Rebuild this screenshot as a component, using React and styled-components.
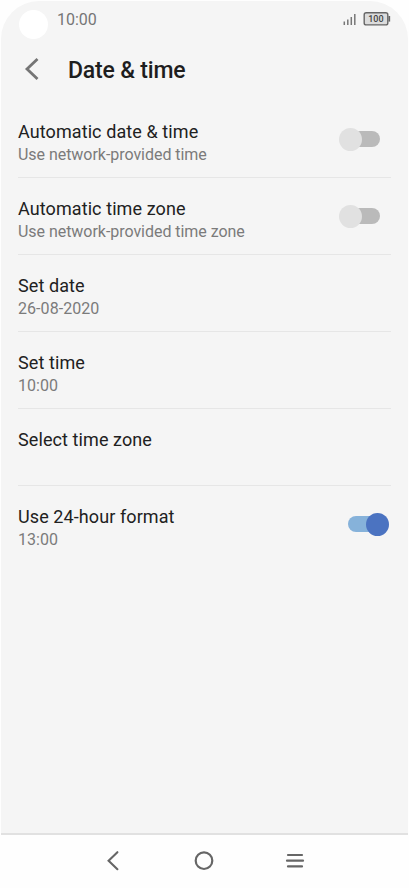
import React from "react";
import styled, { createGlobalStyle } from "styled-components";

const GlobalStyle = createGlobalStyle`
  * { box-sizing: border-box; }
  body { margin: 0; background: #fff; font-family: Roboto, sans-serif; }
`;

const Phone = styled.div`
  width: 409px;
  height: 888px;
  padding: 1px 1px 0;
  display: flex;
  flex-direction: column;
  overflow: hidden;
  background: #fefefe;
`;

const Screen = styled.main`
  flex: 1;
  display: flex;
  flex-direction: column;
  background: #f5f5f5;
  border-radius: 38px 38px 0 0;
`;

const StatusBar = styled.div`
  height: 38px;
  display: flex;
  align-items: flex-start;
  padding: 8px 17px 0 18px;
`;

const Camera = styled.div`
  width: 29px;
  height: 29px;
  margin-top: 1px;
  border-radius: 50%;
  background: #fff;
`;

const Clock = styled.span`
  margin-left: 9px;
  flex: 1;
  font-size: 16px;
  line-height: 22px;
  color: #757575;
`;

const StatusIcon = styled.svg`
  display: block;
  flex: none;
`;

const Header = styled.header`
  height: 62px;
  display: flex;
  align-items: center;
  padding: 0 0 0 23px;
`;

const BackButton = styled.button`
  width: 44px;
  height: 28px;
  padding: 0;
  border: 0;
  background: none;
  display: flex;
`;

const Title = styled.h1`
  margin: 2px 0 0;
  font-size: 23px;
  line-height: 28px;
  letter-spacing: -0.18px;
  font-weight: 500;
  color: #1e1e1e;
`;

const List = styled.div`
  padding: 0 17px;
`;

const Row = styled.div`
  height: 77px;
  display: flex;
  justify-content: space-between;
  padding: 19px ${(p) => (p.$on ? "2.5px" : "11.5px")} 0 0;
  border-bottom: 1px solid ${(p) => (p.$last ? "transparent" : "#e6e6e6")};
`;

const Label = styled.div`
  font-size: 18px;
  line-height: 24px;
  letter-spacing: 0.09px;
  color: #212121;
  white-space: nowrap;
`;

const Detail = styled.div`
  font-size: 16px;
  line-height: 22px;
  letter-spacing: ${(p) => (p.$numeric ? "0.06px" : "-0.04px")};
  color: #7b7b7b;
  white-space: nowrap;
`;

const Toggle = styled.div`
  display: grid;
  width: 41px;
  height: 23px;
  margin-top: 7.5px;
  align-items: center;
  justify-items: ${(p) => (p.$on ? "start" : "end")};

  &::before,
  &::after {
    content: "";
    grid-area: 1 / 1;
  }
  &::before {
    width: 34px;
    height: 16px;
    border-radius: 8px;
    background: ${(p) => (p.$on ? "#86b2da" : "#bababa")};
  }
  &::after {
    width: 23px;
    height: 23px;
    border-radius: 50%;
    justify-self: ${(p) => (p.$on ? "end" : "start")};
    background: ${(p) => (p.$on ? "#4b73c1" : "#e1e1e1")};
  }
`;

const NavBar = styled.nav`
  height: 55px;
  border-top: 2px solid #e1e1e1;
  display: flex;
  justify-content: center;
  gap: 67px;
  padding: 14px 1px 0 0;
`;

const items = [
  { label: "Automatic date & time", detail: "Use network-provided time", on: false },
  { label: "Automatic time zone", detail: "Use network-provided time zone", on: false },
  { label: "Set date", detail: "26-08-2020", numeric: true },
  { label: "Set time", detail: "10:00", numeric: true },
  { label: "Select time zone" },
  { label: "Use 24-hour format", detail: "13:00", numeric: true, on: true },
];

export default function App() {
  return (
    <>
      <GlobalStyle />
      <Phone>
        <Screen>
          <StatusBar>
            <Camera />
            <Clock>10:00</Clock>
            <StatusIcon width="49" height="20" viewBox="0 0 49 20">
              <path d="M2.3 12.5V16M5.8 10.5V16M9.3 8V16M12.8 5V16" stroke="#777" strokeWidth="1.5" />
              <rect x="22.2" y="3.7" width="23.6" height="12.2" rx="2" fill="#dcdcdc" stroke="#666" strokeWidth="1.4" />
              <path d="M47.3 7V12.6" stroke="#666" strokeWidth="1.7" />
              <text x="33.9" y="13.1" textAnchor="middle" fontSize="9" fontWeight="500" fill="#444">100</text>
            </StatusIcon>
          </StatusBar>
          <Header>
            <BackButton aria-label="Back">
              <svg width="18" height="28" viewBox="0 0 18 28">
                <path d="M13.5 3L3 13L13.5 23" fill="none" stroke="#757575" strokeWidth="2.8" />
              </svg>
            </BackButton>
            <Title>Date &amp; time</Title>
          </Header>
          <List>
            {items.map((item, i) => (
              <Row key={item.label} $on={item.on} $last={i === items.length - 1}>
                <div>
                  <Label>{item.label}</Label>
                  {item.detail && <Detail $numeric={item.numeric}>{item.detail}</Detail>}
                </div>
                {item.on !== undefined && <Toggle $on={item.on} role="switch" aria-checked={item.on} />}
              </Row>
            ))}
          </List>
        </Screen>
        <NavBar>
          <svg width="24" height="24" viewBox="0 0 24 24">
            <path d="M16.4 3.2L7.6 11.7L16.4 20.2" fill="none" stroke="#666" strokeWidth="2.1" strokeLinecap="round" />
          </svg>
          <svg width="24" height="24" viewBox="0 0 24 24">
            <circle cx="12" cy="11.7" r="8.3" fill="none" stroke="#666" strokeWidth="2.2" />
          </svg>
          <svg width="24" height="24" viewBox="0 0 24 24">
            <path d="M5 6H19M4 11.7H20M5 17.4H19" fill="none" stroke="#666" strokeWidth="2.2" strokeLinecap="round" />
          </svg>
        </NavBar>
      </Phone>
    </>
  );
}
